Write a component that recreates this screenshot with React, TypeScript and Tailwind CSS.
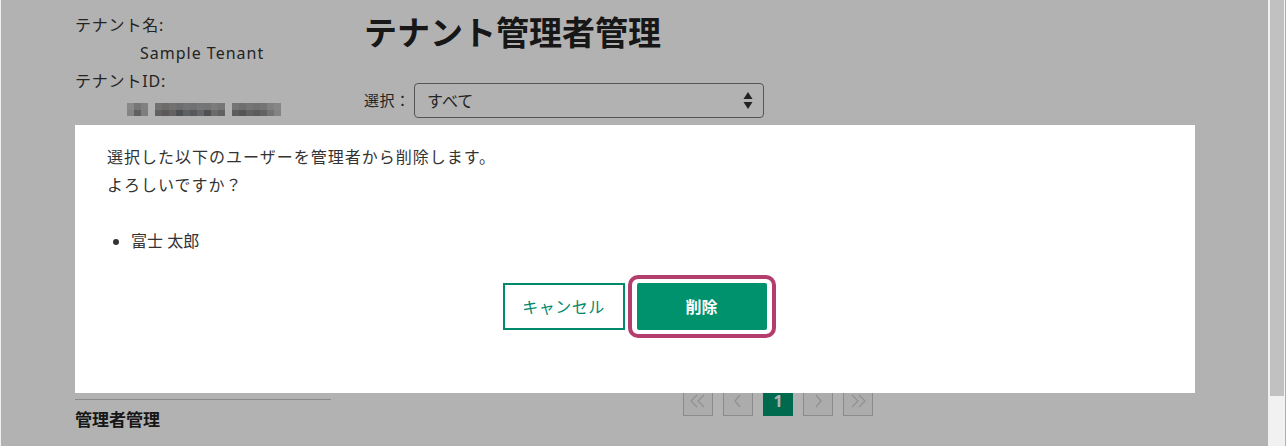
import React from 'react';

const FONT = '"Noto Sans", "Noto Sans CJK JP", sans-serif';

// mosaic blocks that hide the tenant id (top row / bottom row)
const idTop = [
  'bg-[#c4c4c4]', 'bg-[#a9a9a9]', 'bg-[#b9b9b9]', 'bg-transparent', 'bg-[#a3a3a3]', 'bg-[#9c9999]',
  'bg-[#a2a2a2]', 'bg-[#9a9ca0]', 'bg-[#a5a5a5]', 'bg-[#a0a2a4]', 'bg-[#aaaaaa]', 'bg-[#a4a6a8]',
  'bg-[#b0b0b0]', 'bg-[#a9a9a9]', 'bg-transparent', 'bg-[#a6a6a6]', 'bg-[#9e9e9e]', 'bg-[#a8a8a8]',
  'bg-[#a2a2a2]', 'bg-[#a7a7a7]', 'bg-[#b8b8b8]', 'bg-[#c0c0c0]',
];
const idBottom = [
  'bg-[#bdbdbd]', 'bg-[#8a8c8e]', 'bg-[#b5b5b5]', 'bg-transparent', 'bg-[#8e8a89]', 'bg-[#857f7e]',
  'bg-[#8d8d8d]', 'bg-[#6f7377]', 'bg-[#8a8a8a]', 'bg-[#7b7f83]', 'bg-[#939393]', 'bg-[#6f7479]',
  'bg-[#9a9a9a]', 'bg-[#8c8c8c]', 'bg-transparent', 'bg-[#868686]', 'bg-[#7a7a7a]', 'bg-[#8b8b8b]',
  'bg-[#858585]', 'bg-[#8f8f8f]', 'bg-[#a5a5a5]', 'bg-[#bcbcbc]',
];

function Pager() {
  const box = 'w-[30px] h-[30px] flex items-center justify-center border border-[#c8c8c8] bg-[#f6f6f6] text-[#d0d0d0]';
  return (
    <div className="flex gap-[10px]">
      <div className={box}>
        <svg width="18" height="16" viewBox="0 0 18 16" fill="none" stroke="currentColor" strokeWidth="1.3">
          <path d="M8 2 2 8l6 6M15 2 9 8l6 6" />
        </svg>
      </div>
      <div className={box}>
        <svg width="12" height="16" viewBox="0 0 12 16" fill="none" stroke="currentColor" strokeWidth="1.3">
          <path d="M8 2 3 8l5 6" />
        </svg>
      </div>
      <div className="w-[30px] h-[30px] flex items-center justify-center bg-[#009872] text-white text-[16px] font-bold">1</div>
      <div className={box}>
        <svg width="12" height="16" viewBox="0 0 12 16" fill="none" stroke="currentColor" strokeWidth="1.3">
          <path d="M4 2l5 6-5 6" />
        </svg>
      </div>
      <div className={box}>
        <svg width="18" height="16" viewBox="0 0 18 16" fill="none" stroke="currentColor" strokeWidth="1.3">
          <path d="M3 2l6 6-6 6M10 2l6 6-6 6" />
        </svg>
      </div>
    </div>
  );
}

export default function App() {
  return (
    <div className="flex w-[1286px] h-[446px] overflow-hidden" style={{ fontFamily: FONT }}>
      {/* page + dimming overlay */}
      <div className="relative w-[1268px] h-full bg-white border-l border-[#eeeeee] text-[#333333]">
        <div className="flex pl-[74px]">
          {/* sidebar */}
          <aside className="w-[256px] flex flex-col tracking-[0.8px]">
            <div className="pt-[11px] text-[16px] leading-[28px]">テナント名:</div>
            <div className="pl-[65px] text-[16px] leading-[28px] tracking-[1px]">Sample Tenant</div>
            <div className="text-[16px] leading-[28px]">テナントID:</div>
            <div className="pl-[52px] pt-[8px] flex flex-col">
              <div className="flex">
                {idTop.map((c, i) => (
                  <div key={i} className={`w-[7px] h-[7px] ${c}`} />
                ))}
              </div>
              <div className="flex">
                {idBottom.map((c, i) => (
                  <div key={i} className={`w-[7px] h-[6px] ${c}`} />
                ))}
              </div>
            </div>
            <div className="mt-[283px] border-t border-[#c4c4c4]" />
            <div className="pt-[8px] text-[17px] font-bold leading-[24px] tracking-normal text-[#222222]">管理者管理</div>
          </aside>

          {/* main */}
          <main className="ml-[33px] flex flex-col">
            <h1 className="pt-[9px] text-[33px] font-bold leading-[48px] text-[#222222]">テナント管理者管理</h1>
            <div className="mt-[26px] flex items-center">
              <span className="text-[15px] w-[50px] tracking-[0.5px]">選択：</span>
              <div className="w-[350px] h-[35px] border border-[#7a7a7a] rounded-[4px] flex items-center justify-between pl-[12px] pr-[10px] text-[16px]">
                <span>すべて</span>
                <svg width="10" height="19" viewBox="0 0 10 19" fill="#333333">
                  <path d="M5 1 9.5 8h-9zM5 18 .5 11h9z" />
                </svg>
              </div>
            </div>
            <div className="mt-[268px] ml-[319px]">
              <Pager />
            </div>
          </main>
        </div>

        {/* modal overlay */}
        <div className="absolute inset-0 bg-black/30 pt-[125px] pl-[74px]">
          <div className="w-[1120px] h-[268px] bg-white flex flex-col pl-[32px] pt-[18px]">
            <p className="text-[16px] leading-[28px] tracking-[1px] text-[#333333]">
              選択した以下のユーザーを管理者から削除します。
              <br />
              よろしいですか？
            </p>
            <ul className="mt-[28px] list-disc pl-[24px] text-[16px] leading-[28px] text-[#333333]">
              <li>富士 太郎</li>
            </ul>
            <div className="mt-[20px] flex justify-center items-center gap-[3px] pr-[32px] pl-[8px]">
              <button className="w-[122px] h-[47px] border-2 border-[#00896b] text-[#00896b] text-[16px] font-normal tracking-[0.5px] bg-white">
                キャンセル
              </button>
              <div className="px-[5px] py-[4px] border-4 border-[#b33d6c] rounded-[10px]">
                <button className="w-[130px] h-[47px] rounded-[2px] bg-[#00916d] text-white text-[16px] font-bold">
                  削除
                </button>
              </div>
            </div>
          </div>
        </div>
      </div>

      {/* browser scrollbar */}
      <div className="w-[18px] h-full bg-[#f1f1f1] flex">
        <div className="ml-[2px] w-[14px] h-[396px] bg-[#c1c1c1]" />
        <div className="ml-auto w-[1px] h-full bg-[#b0b0b0]" />
      </div>
    </div>
  );
}
